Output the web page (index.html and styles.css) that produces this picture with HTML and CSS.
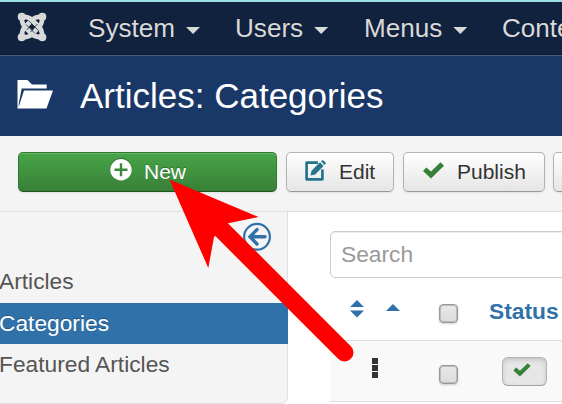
FILE: index.html
```html
<!DOCTYPE html>
<html lang="en">
<head>
<meta charset="utf-8">
<title>Articles: Categories</title>
<link rel="stylesheet" href="styles.css">
</head>
<body>
<nav class="navbar">
  <svg class="brand" width="30" height="30" viewBox="0 0 30 30" aria-hidden="true">
    <g fill="currentColor"><circle cx="4.700" cy="4.700" r="4"/><circle cx="25.300" cy="4.700" r="4"/><circle cx="4.700" cy="25.300" r="4"/><circle cx="25.300" cy="25.300" r="4"/></g>
    <g fill="none" stroke="currentColor" stroke-width="4.700">
      <path d="M5 5C4.500 10 6 13 8 15L18 24"/>
      <path d="M25 25C25.500 20 24 17 22 15L12 6"/>
      <path d="M5 5C10 4.500 13 6 15 8L22 15"/>
      <path d="M25 25C20 25.500 17 24 15 22L8 15"/>
      <path d="M5 25C4.500 20 6 17 8 15L15 8C18 5 20 4.500 25 5"/>
      <path d="M25 5C25.500 10 24 13 22 15L15 22C12 25 10 25.500 5 25"/>
    </g>
    <path d="M11.500 8.500l10 10M9 12.500l9 9M9.500 18l3.500-3.500M17 15.500l3.500-3.500M13.500 20l3-3" fill="none" stroke="#10223e" stroke-width=".7"/>
  </svg>
  <a class="menu system">System<i class="caret"></i></a>
  <a class="menu users">Users<i class="caret"></i></a>
  <a class="menu menus">Menus<i class="caret"></i></a>
  <a class="menu">Content</a>
</nav>
<header class="header">
  <svg class="folder" width="36" height="30" viewBox="0 0 36 30" aria-hidden="true"><path fill="currentColor" d="M.5 29.500V1H10.500L15 5.500H29.700V9.500H4.700L1.700 25V29.500zM7 11.500H36L29.500 29.500H1.200z"/></svg>
  <h1 class="title">Articles: Categories</h1>
</header>
<div class="toolbar">
  <button class="btn btn-new">
    <svg width="22" height="22" viewBox="0 0 22 22" aria-hidden="true"><circle cx="11" cy="10.700" r="10.700" fill="#fff"/><path d="M11 4.200v13M4.500 10.700h13" stroke="#3a8a3b" stroke-width="2.400"/></svg>
    <span>New</span>
  </button>
  <button class="btn btn-edit">
    <svg width="21" height="21" viewBox="0 0 21 21" aria-hidden="true"><path d="M13 2.700H1.600V19.300H17.400V9.500" fill="none" stroke="#24748c" stroke-width="2.700" stroke-linejoin="round"/><path d="M5.500 15.500L6.500 10.800L15 2.300L18.600 5.900L10.200 14.400zM16 1.300L17.200.2Q18 0 18.700.7L20.500 2.500Q21 3.200 20.700 3.700L19.500 4.900z" fill="#24748c"/></svg>
    <span>Edit</span>
  </button>
  <button class="btn btn-publish">
    <svg width="21" height="17" viewBox="0 0 21 17" aria-hidden="true"><path d="M0 9L3.400 5.500L8 9.500L17.500.3L21 3.700L8 16.500z" fill="#378137"/></svg>
    <span>Publish</span>
  </button>
  <button class="btn btn-next"></button>
</div>
<div class="content">
  <aside class="sidebar">
    <div class="toggle"><svg width="29" height="29" viewBox="0 0 29 29" aria-hidden="true"><g fill="none" stroke="#3071a9"><circle cx="15" cy="14.800" r="12.900" stroke-width="2.200"/><path d="M15 7.600L8 14.800L15 22M8.500 14.800H23" stroke-width="3.400" stroke-linecap="round" stroke-linejoin="miter"/></g></svg></div>
    <a class="side-link">Articles</a>
    <a class="side-link active">Categories</a>
    <a class="side-link last">Featured Articles</a>
  </aside>
  <main class="main">
    <div class="search">Search</div>
    <div class="row head">
      <svg class="sort" width="14" height="18" viewBox="0 0 14 18" aria-hidden="true"><path d="M7 0L14 7H0zM0 10.500H14L7 17.500z" fill="#3071a9"/></svg>
      <svg class="asc" width="14" height="7" viewBox="0 0 14 7" aria-hidden="true"><path d="M7 0L14 7H0z" fill="#3071a9"/></svg>
      <span class="check"></span>
      <span class="status">Status</span>
    </div>
    <div class="row item">
      <span class="handle"><i></i><i></i><i></i></span>
      <span class="check"></span>
      <span class="state"><svg width="18" height="14" viewBox="0 0 21 17" aria-hidden="true"><path d="M0 9L3.400 5.500L8 9.500L17.500.3L21 3.700L8 16.500z" fill="#378137"/></svg></span>
    </div>
  </main>
</div>
<svg class="pointer" width="562" height="404" viewBox="0 0 562 404" aria-hidden="true"><path d="M344.500 352.500L210 218" stroke="#f00" stroke-width="18" stroke-linecap="round"/><path d="M169.500 179.500L258.500 217L227 223.500L214 237L208.300 268z" fill="#f00"/></svg>
</body>
</html>
```
FILE: styles.css
```css
* { box-sizing: border-box; }
body {
  margin: 0;
  width: 562px;
  height: 404px;
  overflow: hidden;
  background: #fff;
  font: 22.75px/28px "Liberation Sans", Arial, sans-serif;
  color: #555;
}
svg { display: block; flex: none; }
.navbar {
  display: flex;
  height: 56px;
  overflow: hidden;
  border-top: 2px solid #9ce0e5;
  border-bottom: 1px solid #475c80;
  background: #10223e;
  box-shadow: inset 0 -1px #0c1a30;
  color: #d9d9d9;
  font-size: 26.1px;
  line-height: 52px;
  text-shadow: 0 -1px 0 rgba(0,0,0,.25);
  white-space: nowrap;
}
.brand { margin: 10px 41px 0 17px; }
.menu { display: flex; flex: none; }
.caret {
  width: 14px;
  height: 7px;
  margin: 25px 0 0 11px;
  background: currentColor;
  clip-path: polygon(0 0, 100% 0, 50% 100%);
}
.system { width: 147px; }
.users { width: 129px; }
.menus { width: 138px; }
.header { display: flex; height: 80px; background: #1a3867; color: #fff; }
.folder { margin: 23px 27px 0 17px; }
.title { margin: 0; font-size: 35px; font-weight: 400; line-height: 80px; }
.toolbar {
  display: flex;
  gap: 9px;
  height: 76px;
  padding: 16px 0 0 18px;
  overflow: hidden;
  border-bottom: 1px solid #dfdfdf;
  background: #f4f4f4;
}
.btn {
  display: flex;
  flex: none;
  height: 40px;
  padding: 0;
  border: 1px solid #b3b3b3;
  border-bottom-color: #989898;
  border-radius: 5px;
  background: linear-gradient(#fff, #e5e5e5);
  box-shadow: inset 0 1px rgba(255,255,255,.2), 0 1px 2px rgba(0,0,0,.08);
  color: #333;
  font: 21px/38px "Liberation Sans", Arial, sans-serif;
}
.btn-new {
  width: 259px;
  border-color: #2e7b30 #2e7b30 #1e5320;
  background: linear-gradient(#47a447, #388038);
  color: #fff;
  text-shadow: 0 -1px 0 rgba(0,0,0,.25);
}
.btn-new svg { margin: 6px 12px 0 91px; filter: drop-shadow(0 -1px 0 #2d742e); }
.btn-edit { width: 108px; }
.btn-edit svg { margin: 7px 13px 0 18px; }
.btn-publish { width: 142px; }
.btn-publish svg { margin: 9px 13px 0 19px; }
.btn-next { width: 60px; margin-left: -1px; }
.content { display: flex; height: 192px; overflow: hidden; }
.sidebar {
  flex: none;
  width: 288px;
  border-right: 1px solid #dfdfdf;
  border-bottom: 1px solid #dfdfdf;
  border-radius: 0 0 7px 0;
  background: #f4f4f4;
}
.toggle { display: flex; justify-content: flex-end; height: 49px; padding: 10px 16px 0 0; }
.side-link { display: block; height: 42px; margin-left: -1px; line-height: 41px; }
.active {
  height: 41px;
  margin-right: -1px;
  background: #3071a9;
  color: #fff;
  text-shadow: 0 -1px 0 rgba(0,0,0,.25);
}
.main { flex: none; width: 260px; margin-left: 42px; }
.search {
  height: 47px;
  margin-top: 19px;
  padding-left: 10px;
  border: 1px solid #ccc;
  border-radius: 5px;
  box-shadow: inset 0 1px 1px rgba(0,0,0,.075);
  color: #999;
  line-height: 45px;
}
.row { display: flex; }
.head { height: 62px; }
.sort { margin: 22px 0 0 20px; }
.asc { margin: 26px 0 0 22px; }
.check {
  flex: none;
  width: 19px;
  height: 19px;
  border: 1px solid #999;
  border-radius: 4px;
  background: linear-gradient(#e8e8e8, #dcdcdc);
  box-shadow: inset 0 0 0 1px #bbb, 0 1px 2px rgba(0,0,0,.18);
}
.head .check { margin: 26px 0 0 39px; }
.status { margin: 19px 0 0 31px; color: #3071a9; font-weight: 700; }
.item {
  height: 62px;
  border-top: 1px solid #ddd;
  border-bottom: 1px solid #ddd;
  background: #f9f9f9;
}
.handle { display: grid; gap: 1px; width: 6px; height: 20px; margin: 17px 0 0 42px; }
.handle i { background: #333; }
.item .check { margin: 24px 0 0 61px; }
.state {
  flex: none;
  width: 45px;
  height: 29px;
  margin: 16px 0 0 44px;
  padding: 5px 0 0 10px;
  border: 1px solid #b3b3b3;
  border-bottom-color: #a2a2a2;
  border-radius: 6px;
  background: #e6e6e6;
  box-shadow: inset 0 2px 4px rgba(0,0,0,.15);
}
.pointer { position: absolute; top: 0; left: 0; pointer-events: none; }
```
